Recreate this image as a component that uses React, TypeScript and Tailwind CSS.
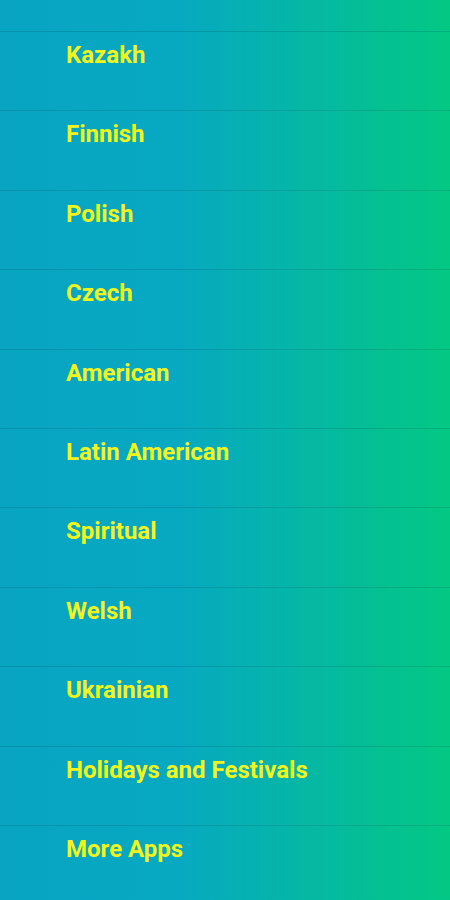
const items = [
  "Kazakh",
  "Finnish",
  "Polish",
  "Czech",
  "American",
  "Latin American",
  "Spiritual",
  "Welsh",
  "Ukrainian",
  "Holidays and Festivals",
  "More Apps",
];

export default function App() {
  return (
    <div className="w-[450px] h-[900px] overflow-hidden bg-[linear-gradient(90deg,#08a4c2_0%,#07a9c1_40%,#03c883_100%)] font-['Roboto',sans-serif]">
      {/* tail of the row above */}
      <div className="h-[31px]" />
      {items.map((name, i) => (
        <div
          key={i}
          className="h-[79.4px] border-t border-[rgba(0,50,70,0.16)] pl-[66px] pt-[9px]"
        >
          <span className="text-[24px] font-bold leading-[28px] text-[#f2f51c]">
            {name}
          </span>
        </div>
      ))}
    </div>
  );
}
